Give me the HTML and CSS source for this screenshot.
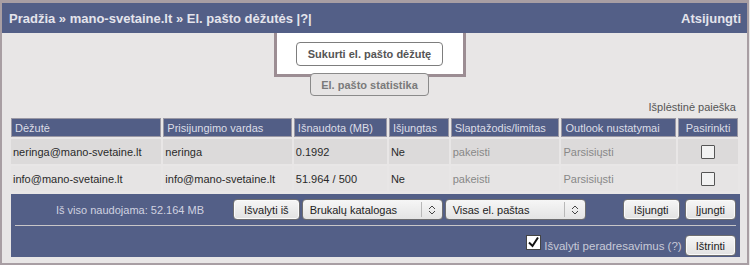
FILE: index.html
```html
<!DOCTYPE html>
<html lang="lt">
<head>
    <meta charset="UTF-8">
    <title>El. pašto dėžutės</title>
    <link rel="stylesheet" href="styles.css">
</head>
<body>
    <div class="frame">
        <div class="topbar">
            <div class="crumbs">Pradžia » mano-svetaine.lt » El. pašto dėžutės |?|</div>
            <div class="logout">Atsijungti</div>
        </div>

        <div class="content">
            <div class="actions">
                <div class="create-box">
                    <button class="plain-btn strong">Sukurti el. pašto dėžutę</button>
                </div>
                <button class="plain-btn stats">El. pašto statistika</button>
            </div>

            <div class="search-link">Išplėstinė paieška</div>

            <table class="boxes">
                <thead>
                    <tr>
                        <th class="c-box">Dėžutė</th>
                        <th class="c-login">Prisijungimo vardas</th>
                        <th class="c-used">Išnaudota (MB)</th>
                        <th class="c-off">Išjungtas</th>
                        <th class="c-pass">Slaptažodis/limitas</th>
                        <th class="c-outlook">Outlook nustatymai</th>
                        <th class="c-pick">Pasirinkti</th>
                    </tr>
                </thead>
                <tbody>
                    <tr class="odd">
                        <td>neringa@mano-svetaine.lt</td>
                        <td>neringa</td>
                        <td>0.1992</td>
                        <td>Ne</td>
                        <td class="link">pakeisti</td>
                        <td class="link">Parsisiųsti</td>
                        <td class="pick"><span class="box"></span></td>
                    </tr>
                    <tr class="even">
                        <td>info@mano-svetaine.lt</td>
                        <td>info@mano-svetaine.lt</td>
                        <td>51.964 / 500</td>
                        <td>Ne</td>
                        <td class="link">pakeisti</td>
                        <td class="link">Parsisiųsti</td>
                        <td class="pick"><span class="box"></span></td>
                    </tr>
                </tbody>
            </table>

            <div class="panel">
                <div class="panel-row">
                    <div class="total">Iš viso naudojama: 52.164 MB</div>
                    <button class="gtk-btn">Išvalyti iš</button>
                    <div class="fake-select sel-wide">
                        <span>Brukalų katalogas</span>
                        <span class="arrows"><svg width="8" height="12" viewBox="0 0 8 12"><path d="M1 5 L4 2 L7 5 M1 7 L4 10 L7 7" fill="none" stroke="#444" stroke-width="1"/></svg></span>
                    </div>
                    <div class="fake-select sel-wide">
                        <span>Visas el. paštas</span>
                        <span class="arrows"><svg width="8" height="12" viewBox="0 0 8 12"><path d="M1 5 L4 2 L7 5 M1 7 L4 10 L7 7" fill="none" stroke="#444" stroke-width="1"/></svg></span>
                    </div>
                    <div class="spacer"></div>
                    <button class="gtk-btn w-off">Išjungti</button>
                    <button class="gtk-btn"><u>Į</u>jungti</button>
                </div>
                <div class="panel-row second">
                    <div class="spacer"></div>
                    <span class="checked"><svg width="15" height="15" viewBox="0 0 15 15"><rect x="0.5" y="0.5" width="14" height="14" fill="#fff" stroke="#444"/><path d="M3 7.5 L6.5 11 L12 2.5" fill="none" stroke="#111" stroke-width="2"/></svg></span>
                    <span class="check-label">Išvalyti peradresavimus (?)</span>
                    <button class="gtk-btn">Ištrinti</button>
                </div>
            </div>
        </div>
    </div>
</body>
</html>
```

FILE: styles.css
```css
html, body {
    margin: 0;
    padding: 0;
}
body {
    font-family: "Liberation Sans", Arial, sans-serif;
    font-size: 11px;
    background: #e8e6e6;
    color: #222;
}
.frame {
    width: 745px;
    height: 260px;
    border: 2px solid #a89ea3;
    border-top-width: 3px;
    background: #e8e6e6;
    overflow: hidden;
}
.topbar {
    height: 30px;
    background: #535f87;
    color: #e4e4ec;
    font-weight: bold;
    font-size: 13px;
    display: flex;
    align-items: center;
    justify-content: space-between;
    padding: 0 6px 0 7px;
}
.content {
    padding: 0 8px 0 8px;
}
.actions {
    display: flex;
    flex-direction: column;
    align-items: center;
    padding-right: 10px;
}
.create-box {
    width: 192px;
    height: 44px;
    background: #fff;
    border: 3px solid #9c8d93;
    border-top: none;
    display: flex;
    justify-content: center;
    padding-top: 9px;
    box-sizing: border-box;
}
.plain-btn {
    font-family: inherit;
    font-size: 11px;
    font-weight: bold;
    white-space: nowrap;
    background: #fff;
    border: 1px solid #7d7d7d;
    border-radius: 4px;
    color: #555;
    height: 24px;
    padding: 0 8px;
}
.plain-btn.strong {
    width: 147px;
}
.plain-btn.stats {
    background: #e6e4e4;
    color: #7a7a7a;
    width: 119px;
    height: 23px;
    margin-top: -4px;
    position: relative;
    border-color: #8a8a8a;
}
.search-link {
    text-align: right;
    color: #555;
    font-size: 11px;
    margin-top: 5px;
    padding-right: 3px;
    height: 15px;
}
.boxes {
    width: 731px;
    border-collapse: separate;
    border-spacing: 2px 2px;
    margin-left: -1px;
}
.boxes th {
    background: #525e86;
    color: #dcdde6;
    font-weight: normal;
    text-align: left;
    height: 17px;
    padding: 0 3px;
    border: 1px solid #9a98a4;
}
.boxes th.c-pick {
    text-align: center;
}
.c-box { width: 144px; }
.c-login { width: 122px; }
.c-used { width: 86px; }
.c-off { width: 52px; }
.c-pass { width: 101px; }
.c-outlook { width: 108px; }
.c-pick { width: 52px; }
.boxes td {
    height: 25px;
    padding: 0 2px;
    color: #2a2a2a;
}
.boxes tr.odd td {
    background: #dcdada;
}
.boxes tr.even td {
    background: #e6e4e4;
}
.boxes td.link {
    color: #888;
}
.boxes td.pick {
    text-align: center;
}
.box {
    display: inline-block;
    width: 12px;
    height: 12px;
    border: 1px solid #555;
    background: #f2f2f2;
    vertical-align: middle;
    border-radius: 1px;
}
.panel {
    background: #535f87;
    width: 729px;
    height: 63px;
    margin-top: 1px;
    margin-left: 1px;
    box-sizing: border-box;
    padding: 5px 4px 0 4px;
}
.panel-row {
    display: flex;
    align-items: center;
    gap: 2px;
    height: 21px;
}
.panel-row.second {
    border-top: 1px solid #c8c6c8;
    margin-top: 5px;
    padding-top: 5px;
    height: 25px;
    align-items: flex-end;
    gap: 3px;
}
.total {
    width: 216px;
    padding-left: 14px;
    text-align: center;
    color: #d0d2e0;
    font-size: 11px;
    box-sizing: border-box;
}
.spacer {
    flex: 1;
}
.gtk-btn {
    font-family: inherit;
    font-size: 11px;
    color: #222;
    height: 21px;
    padding: 0 10px;
    border: 1px solid #6e6e70;
    border-radius: 4px;
    background: linear-gradient(#f6f6f6, #e2e2e2);
    box-shadow: inset 0 0 0 1px #fafafa;
}
.gtk-btn.w-off {
    width: 57px;
}
.gtk-btn + .gtk-btn {
    margin-left: 3px;
}
.fake-select {
    height: 21px;
    font-size: 11px;
    box-sizing: border-box;
    border: 1px solid #6e6e70;
    border-radius: 4px;
    background: linear-gradient(#f6f6f6, #e4e4e4);
    display: flex;
    align-items: center;
    justify-content: space-between;
    padding-left: 7px;
    color: #222;
}
.sel-wide {
    width: 141px;
}
.arrows {
    display: flex;
    align-items: center;
    justify-content: center;
    width: 20px;
    height: 15px;
    border-left: 1px solid #b8b8b8;
}
.checked {
    display: flex;
    margin-bottom: 6px;
}
.check-label {
    color: #c8cad8;
    font-size: 11.5px;
    margin-bottom: 4px;
}
```
